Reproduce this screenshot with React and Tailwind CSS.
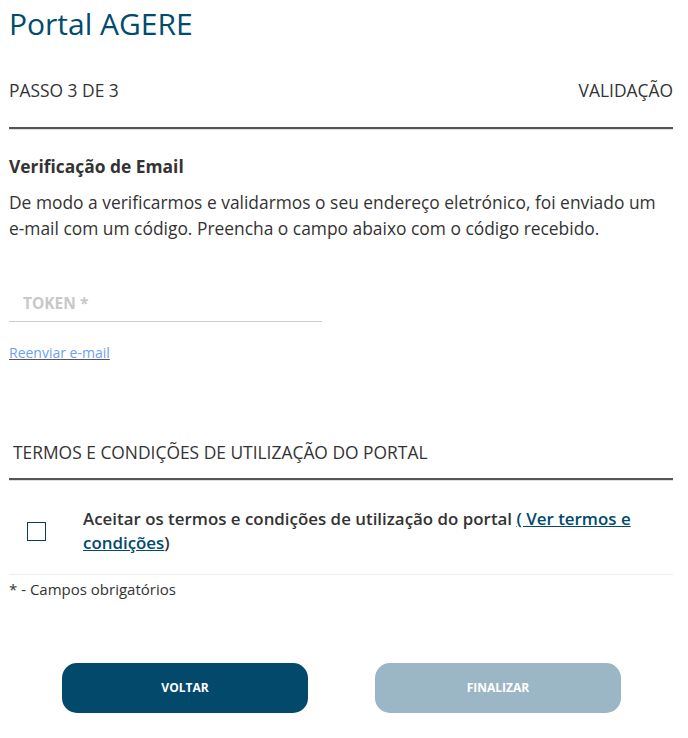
export default function App() {
  return (
    <div className="bg-white min-h-screen text-[#333] font-['Open_Sans',sans-serif]">
      <div className="w-[664px] ml-[9px] pt-[4px]">

        <h1 className="text-[30px] leading-[40px] text-[#004b6e]">
          Portal AGERE
        </h1>

        <div className="flex justify-between items-center mt-[35px] text-[17.4px] leading-[22px]">
          <span>PASSO 3 DE 3</span>
          <span>VALIDAÇÃO</span>
        </div>

        <div className="mt-[26px] border-t-2 border-[#555] shadow-[0_1px_0_#ddd]" />

        <h2 className="mt-[26px] font-bold text-[17.4px] leading-[22px]">
          Verificação de Email
        </h2>

        <p className="mt-[12px] text-[17.4px] leading-[26px]">
          De modo a verificarmos e validarmos o seu endereço eletrónico, foi enviado um
          e-mail com um código. Preencha o campo abaixo com o código recebido.
        </p>

        <div className="mt-[50px] w-[313px] border-b border-[#ccc] pb-[6px]">
          <input
            placeholder="TOKEN *"
            className="w-full pl-[14px] text-[15.5px] leading-[22px] font-bold outline-none placeholder:text-[#c8c8c8]"
          />
        </div>

        <a href="#" className="block mt-[22px] text-[14px] leading-[18px] text-[#6f9ff2] underline decoration-[#555] w-fit">
          Reenviar e-mail
        </a>

        <div className="mt-[79px] pl-[4px] text-[17.4px] leading-[22px]">
          TERMOS E CONDIÇÕES DE UTILIZAÇÃO DO PORTAL
        </div>

        <div className="mt-[15px] border-t-2 border-[#555] shadow-[0_1px_0_#ddd]" />

        <div className="flex items-center pt-[27px] pb-[19px] border-b border-[#eee]">
          <div className="w-[74px] shrink-0 flex justify-start pl-[18px]">
            <div className="w-[19px] h-[19px] border border-[#0b3b55]" />
          </div>
          <p className="text-[16.9px] leading-[24px] font-semibold text-[#333]">
            Aceitar os termos e condições de utilização do portal{" "}
            <a href="#" className="text-[#004b6e] underline">( Ver termos e condições</a>)
          </p>
        </div>

        <p className="mt-[4px] text-[15px] leading-[20px]">
          * - Campos obrigatórios
        </p>

        <div className="flex mt-[64px] pl-[53px] gap-[67px]">
          <button className="w-[246px] h-[50px] rounded-[15px] bg-[#02496c] text-white text-[12px] font-bold">
            VOLTAR
          </button>
          <button className="w-[246px] h-[50px] rounded-[15px] bg-[#9bb7c5] text-white text-[12px] font-bold">
            FINALIZAR
          </button>
        </div>

      </div>
    </div>
  );
}
